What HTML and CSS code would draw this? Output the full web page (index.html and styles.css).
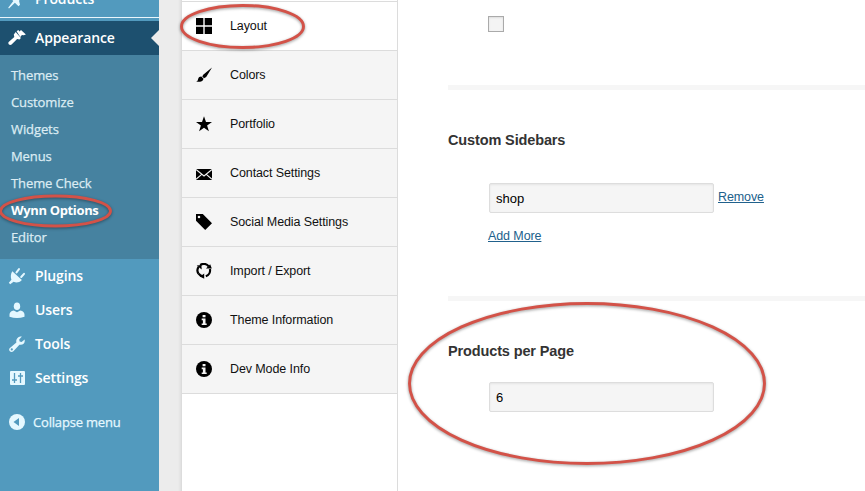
FILE: index.html
```html
<!DOCTYPE html>
<html lang="en">
<head>
<meta charset="utf-8">
<title>Wynn Options</title>
<link rel="stylesheet" href="styles.css">
</head>
<body>
<div class="app">
  <aside class="admin">
    <div class="item item-cut"><svg viewBox="0 0 18 18"><path d="M11 1l6 6-1.8 1-2.2-.5-2 2.2 1 4.1-1.5 1.5-3.6-3.5L1 17.5l-.8-.8L5.3 10 2.2 6.8 4 5.4l4 .9 2.3-2z"/></svg><span>Products</span></div>
    <div class="rule"></div>
    <div class="item current"><svg viewBox="0 0 18 18"><path d="M8.6 2.3l1.7-1.2 1.2 1.3L13 1.1l4.9 4.3-2.2.8-1.8-.2-1.6 2.1z"/><path d="M7.7 3.1l5.2 5.8-1.4 1.6-2.4-.6-5.5 5.7C1.9 17.1-.7 14.8.7 13l5.6-5.1-.5-2.3z"/></svg><span>Appearance</span></div>
    <ul class="submenu">
      <li>Themes</li><li>Customize</li><li>Widgets</li><li>Menus</li><li>Theme Check</li><li class="active"><span>Wynn Options</span></li><li>Editor</li>
    </ul>
    <div class="item"><svg viewBox="0 0 18 18"><path d="M4.3 4.2l9.6 8.9c-3 3-6 2.9-8.3 1.7L2.2 17.2.8 15.8l2.6-3.1c-1-2.8-.7-5.9.9-8.5z"/><path d="M8.5 5.4l2.5-3.3M13.2 10l2.8-3.2" class="stroke"/></svg><span>Plugins</span></div>
    <div class="item"><svg viewBox="0 0 18 18"><ellipse cx="9" cy="5.2" rx="3.2" ry="3.8"/><path d="M1.5 15.7v-2.1c0-2 1.4-3.6 4.3-4.1L9 11.2l3.2-1.7c2.9.5 4.3 2.1 4.3 4.1v2.1Q9 18.2 1.5 15.7z"/></svg><span>Users</span></div>
    <div class="item"><svg viewBox="0 0 18 18"><path fill-rule="evenodd" d="M13.9 1.5l-2.7 3 .4 2.1 2 .5 3-2.7c.9 3.5-1.8 6.2-5.2 5.3l-6 6.5C3 18.3-.1 15.4 1.6 13.2l6.8-5.8c-.9-3.2 2-6.7 5.5-5.9zM3.8 13.3a1.1 1.1 0 1 0 0 2.2 1.1 1.1 0 0 0 0-2.2z"/></svg><span>Tools</span></div>
    <div class="item"><svg viewBox="0 0 18 18"><rect x="2" y="2" width="15" height="14" rx="1"/><path class="cut" d="M6.5 4v10M4 11h5M12.5 4v10M10 7h5"/></svg><span>Settings</span></div>
    <div class="collapse"><svg viewBox="0 0 18 18"><circle cx="9" cy="9" r="8"/><path class="arrow" d="M11 5v8L5.5 9z"/></svg><span>Collapse menu</span></div>
  </aside>
  <div class="gutter"></div>
  <nav class="sections">
    <a class="tab selected"><svg viewBox="0 0 16 16"><path d="M0 0h7.3v7.3H0zM8.7 0H16v7.3H8.7zM0 8.7h7.3V16H0zM8.7 8.7H16V16H8.7z"/></svg><span>Layout</span></a>
    <a class="tab"><svg viewBox="0 0 16 16"><path d="M16 .5L10.2 10 8 11.3 6.3 9.5 7.2 7.8zM5.3 9.6l2.2 2.1c-.4 2.7-3.7 3.5-7.5 3 2-.6 1.7-1.5 2.2-2.9.4-1.4 1.7-2.3 3.1-2.2z"/></svg><span>Colors</span></a>
    <a class="tab"><svg viewBox="0 0 16 16"><path d="M8 .3l2 5.7h6l-4.9 3.5 1.8 5.8L8 11.7l-4.9 3.6 1.8-5.8L0 6h6z"/></svg><span>Portfolio</span></a>
    <a class="tab"><svg viewBox="0 0 16 16"><path d="M0 4h16v11H0z"/><path class="flap" d="M0 4.5l8 6.5 8-6.5M0 14.3l5.7-5M16 14.3l-5.7-5"/></svg><span>Contact Settings</span></a>
    <a class="tab"><svg viewBox="0 0 16 16"><path fill-rule="evenodd" d="M0 0h6.8L16 9.2 9.2 16 0 6.8zM3 1.7a1.3 1.3 0 1 0 0 2.6 1.3 1.3 0 0 0 0-2.6z"/></svg><span>Social Media Settings</span></a>
    <a class="tab"><svg viewBox="0 0 16 16"><path class="ring" d="M2.4 10.6A6.2 6.2 0 0 1 2.6 3.8M4.2 2A6.2 6.2 0 0 1 12.6 3.2M13.9 6A6.2 6.2 0 0 1 9.8 13.2M7.2 13.4A6.2 6.2 0 0 1 2.6 10.6"/><path d="M.7 2.5L5.4 2l.3 4.5zM10 5.6l5.8-.2-1.6-4.2zM8.2 10.6v5.2l-4-2.2z"/></svg><span>Import / Export</span></a>
    <a class="tab"><svg viewBox="0 0 16 16"><circle cx="8" cy="8" r="8"/><path class="info" d="M6.6 3h2.9v2.2H6.6zM5.7 6.6h3.8v4.8h1.2V13h-5v-1.6h1.2V8.2H5.7z"/></svg><span>Theme Information</span></a>
    <a class="tab"><svg viewBox="0 0 16 16"><circle cx="8" cy="8" r="8"/><path class="info" d="M6.6 3h2.9v2.2H6.6zM5.7 6.6h3.8v4.8h1.2V13h-5v-1.6h1.2V8.2H5.7z"/></svg><span>Dev Mode Info</span></a>
  </nav>
  <main class="panel">
    <section class="block first"><span class="check"></span></section>
    <section class="block sidebars">
      <h2>Custom Sidebars</h2>
      <div class="field"><input type="text" value="shop"><a>Remove</a></div>
      <a class="add">Add More</a>
    </section>
    <section class="block products">
      <h2>Products per Page</h2>
      <div class="field"><input type="text" value="6"></div>
    </section>
  </main>
  <svg class="marks" viewBox="0 0 865 491"><ellipse cx="242.5" cy="26.5" rx="61" ry="21"/><ellipse cx="55.5" cy="211" rx="55" ry="15"/><ellipse cx="587" cy="383.5" rx="177.5" ry="80"/></svg>
</div>
</body>
</html>
```
FILE: styles.css
```css
* { box-sizing: border-box; }
body { margin: 0; background: #fff; font-family: "Liberation Sans", Arial, sans-serif; font-size: 12.5px; color: #111; }
.app { position: relative; display: flex; width: 865px; height: 491px; overflow: hidden; }
.admin { width: 159px; flex: none; background: #529abe; color: #fff; font-family: "Open Sans", sans-serif; }
.item { display: flex; align-items: center; height: 34px; padding-left: 8px; font-size: 14px; font-weight: 600; letter-spacing: -.12px; line-height: 20px; gap: 9px; }
.item svg, .collapse svg { width: 18px; height: 18px; flex: none; fill: #e5f8ff; }
.item-cut { height: 17px; align-items: flex-end; overflow: hidden; }
.item-cut span { margin-bottom: 8px; }
.item-cut svg { margin-bottom: 8px; }
.rule { height: 4px; border-top: 1.5px solid #eaf6fc; background: #529abe; }
.current { position: relative; background: #1d506f; }
.current svg { fill: #fff; }
.current::after { content: ""; position: absolute; right: 0; top: 9px; border: 8px solid transparent; border-left: 0; border-right-color: #ececec; }
.submenu { list-style: none; margin: 0; height: 204px; padding: 7px 0 0 11px; background: #4682a0; color: #dcecf3; font-size: 13px; line-height: 27px; letter-spacing: -.1px; -webkit-text-stroke: .25px #dcecf3; }
.active { color: #fff; font-weight: 700; letter-spacing: -.35px; -webkit-text-stroke: 0; }
.stroke { fill: none; stroke: #e5f8ff; stroke-width: 2; stroke-linecap: round; }
.cut { fill: none; stroke: #529abe; stroke-width: 1.3; }
.arrow { fill: #529abe; }
.collapse { display: flex; align-items: center; gap: 7px; margin-top: 10px; padding-left: 8px; height: 34px; font-size: 13px; letter-spacing: -.18px; color: #e5f8ff; -webkit-text-stroke: .25px #e5f8ff; }
.collapse svg { -webkit-text-stroke: 0; }
.gutter { width: 22px; flex: none; background: linear-gradient(90deg, #ececec 19px, #e0e0e0); }
.sections { width: 217px; flex: none; border: solid #dcdcdc; border-width: 0 1px; padding-top: 1px; }
.tab { display: flex; align-items: center; height: 49px; gap: 18px; padding-left: 14px; background: #f5f5f5; border-top: 1px solid #dcdcdc; letter-spacing: -.1px; }
.tab:last-child { height: 50px; border-bottom: 1px solid #dcdcdc; }
.tab:last-child svg, .tab:last-child span { margin-bottom: 1px; }
.selected { background: #fff; }
.tab svg { width: 16px; height: 16px; margin-bottom: 1px; }
.flap { fill: none; stroke: #f5f5f5; stroke-width: 1.1; }
.ring { fill: none; stroke: #000; stroke-width: 2.2; }
.info { fill: #f5f5f5; }
.panel { flex: 1; padding-left: 50px; }
.block { border-bottom: 5px solid #f6f6f6; }
.first { height: 90px; padding: 16px 0 0 40px; }
.check { display: block; width: 16px; height: 16px; border: 1px solid #aaa; background: #f4f4f4; box-shadow: inset 0 1px 2px #ddd; }
.sidebars { height: 211px; padding-top: 41px; }
.products { padding-top: 41px; border: 0; }
h2 { margin: 0; font-size: 14.5px; letter-spacing: -.13px; line-height: 18px; color: #333; }
.field { display: flex; margin: 34px 0 0 41px; gap: 4px; }
.products .field { margin-top: 22px; }
input { width: 225px; height: 30px; margin: 0; padding: 0 6px; border: 1px solid #ddd; border-radius: 2px; background: #f5f5f5; box-shadow: inset 0 1px 2px #e4e4e4; font: 13px "Liberation Sans", sans-serif; color: #000; }
.panel a { color: #21618c; text-decoration: underline; line-height: 16px; letter-spacing: -.1px; }
.field a { margin-top: 6px; }
.add { display: block; margin: 15px 0 0 40px; }
.marks { position: absolute; inset: 0; width: 865px; height: 491px; pointer-events: none; }
.marks ellipse { fill: none; stroke: #d35248; stroke-width: 2.9; filter: drop-shadow(0 1px 1.5px rgba(0,0,0,.4)); }
```
